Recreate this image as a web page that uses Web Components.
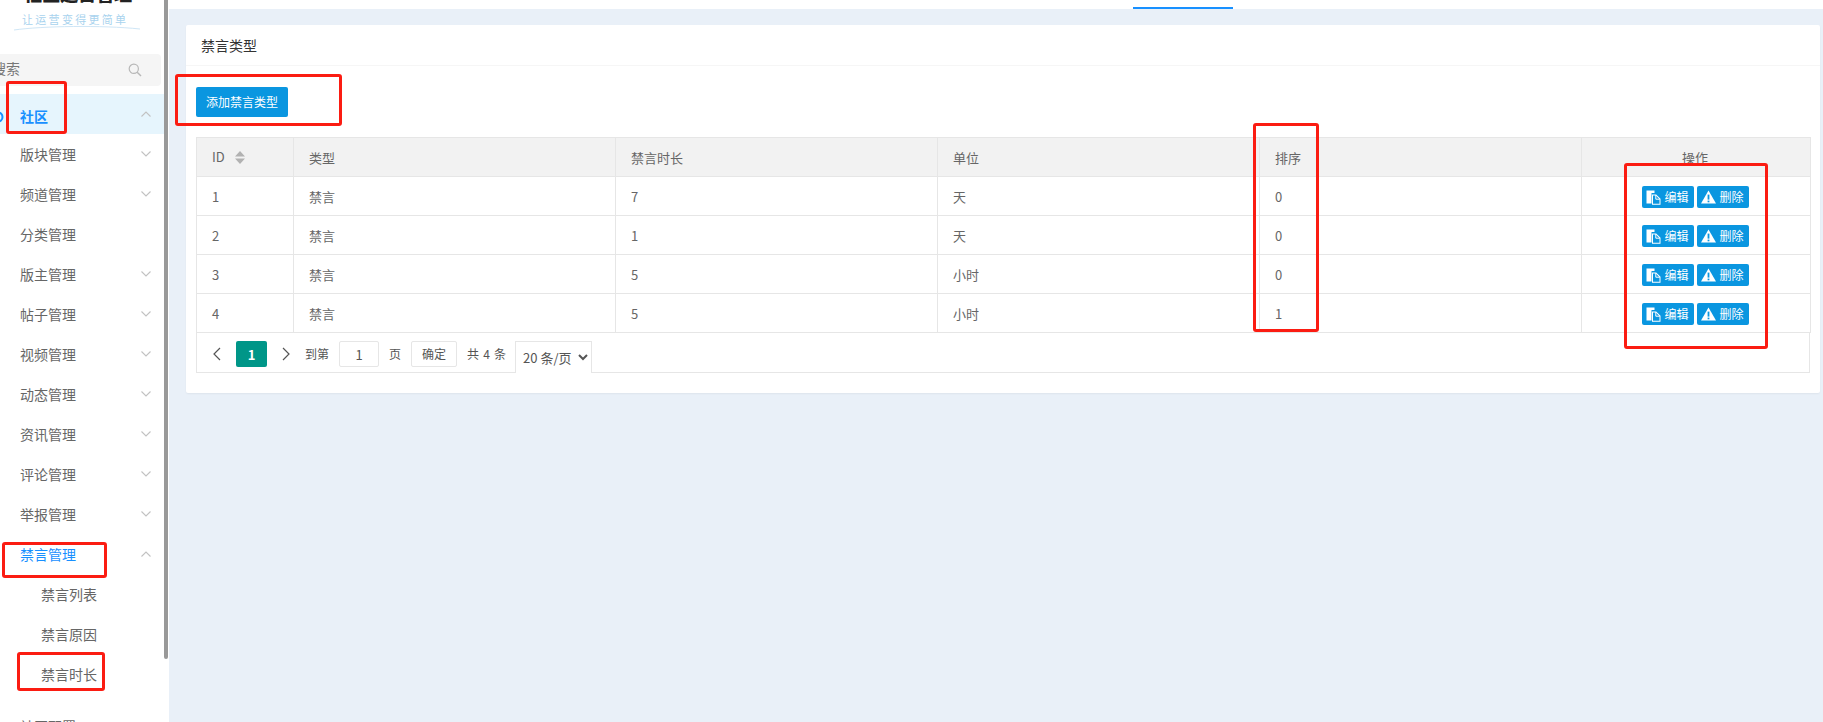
<!DOCTYPE html>
<html><head><meta charset="utf-8">
<style>
html,body{margin:0;height:100%;overflow:hidden}
body{font-family:"Noto Sans CJK SC","Noto Sans",sans-serif;color:#666}
</style></head><body>
<x-app></x-app>
<script>
const CHEV_D='M.5 .5l4.5 4.5 4.5-4.5', CHEV_U='M.5 5.5l4.5-4.5 4.5 4.5';
const chev=(up)=>`<svg width="10" height="6" viewBox="0 0 10 6"><path d="${up?CHEV_U:CHEV_D}" fill="none" stroke="#c2c2c2" stroke-width="1.1"/></svg>`;
class XNavItem extends HTMLElement{
  connectedCallback(){
    const s=this.attachShadow({mode:'open'});
    const arrow=this.getAttribute('arrow');
    s.innerHTML=`<style>
      :host{display:flex;align-items:center;height:40px;padding-left:20px;font-size:14px;color:#666;box-sizing:border-box;position:relative;line-height:1}
      :host([sub]){padding-left:41px}
      :host([open]){color:#1890ff}
      :host([root]){color:#1890ff;background:#e6f5fd;font-weight:700}
      .t{flex:1;transform:translateY(var(--dy,0))}
      .a{display:flex;width:10px;margin-right:13px}
      .ic{position:absolute;left:-8px;top:17px;width:12px;height:12px}
    </style>${this.hasAttribute('root')?'<svg class="ic" viewBox="0 0 12 12"><circle cx="6" cy="6" r="4.5" fill="none" stroke="#1890ff" stroke-width="2"/></svg>':''}<span class="t"><slot></slot></span>${arrow?`<span class="a">${chev(arrow==='up')}</span>`:''}`;
  }
}
class XSidebar extends HTMLElement{
  connectedCallback(){
    const s=this.attachShadow({mode:'open'});
    s.innerHTML=`<style>
      :host{display:block;width:169px;flex:none;background:#fff;position:relative;overflow:hidden;height:722px}
      .inner{width:164px}
      .logo{height:54px;position:relative;overflow:hidden}
      .brand{position:absolute;left:24px;top:-14px;font-size:18px;font-weight:900;color:#222;line-height:15px;white-space:nowrap}
      .sub{position:absolute;left:22px;top:12px;font-size:11px;line-height:14px;color:#a9d3ee;white-space:nowrap;letter-spacing:2.3px}
      .sw{position:absolute;left:12px;top:25px}
      .search{height:32px;background:#f5f5f5;border-radius:4px;margin-right:3px;display:flex;align-items:center;justify-content:space-between;font-size:14px;color:#777;margin-left:-10px;padding-left:2px;padding-right:19px;box-sizing:border-box;width:171px}
      .search span{transform:translateY(-2px)}
      .list{margin-top:8px}
      .thumb{position:absolute;right:1px;top:0;width:4px;height:659px;background:#999;border-radius:0 0 2px 2px}
    </style>
    <div class="inner">
      <div class="logo"><span class="brand">社区运营管理</span><span class="sub">让运营变得更简单</span>
        <svg class="sw" width="130" height="6" viewBox="0 0 130 6"><path d="M2 5C30 1 90 0 128 4" fill="none" stroke="#cfe6f6" stroke-width="1"/></svg></div>
      <div class="search"><span>搜索</span><svg width="14" height="14" viewBox="0 0 14 14"><circle cx="5.8" cy="5.8" r="4.6" fill="none" stroke="#b8b8b8" stroke-width="1.2"/><path d="M9.2 9.2L13 13" stroke="#b8b8b8" stroke-width="1.4"/></svg></div>
      <div class="list">
        <x-nav-item root arrow="up" style="--dy:2px">社区</x-nav-item>
        <x-nav-item arrow="down">版块管理</x-nav-item>
        <x-nav-item arrow="down">频道管理</x-nav-item>
        <x-nav-item>分类管理</x-nav-item>
        <x-nav-item arrow="down">版主管理</x-nav-item>
        <x-nav-item arrow="down">帖子管理</x-nav-item>
        <x-nav-item arrow="down">视频管理</x-nav-item>
        <x-nav-item arrow="down">动态管理</x-nav-item>
        <x-nav-item arrow="down">资讯管理</x-nav-item>
        <x-nav-item arrow="down">评论管理</x-nav-item>
        <x-nav-item arrow="down">举报管理</x-nav-item>
        <x-nav-item open arrow="up">禁言管理</x-nav-item>
        <x-nav-item sub>禁言列表</x-nav-item>
        <x-nav-item sub>禁言原因</x-nav-item>
        <x-nav-item sub>禁言时长</x-nav-item>
        <x-nav-item style="margin-top:12px">社区配置</x-nav-item>
      </div>
    </div><div class="thumb"></div>`;
  }
}
class XBtn extends HTMLElement{
  connectedCallback(){
    const s=this.attachShadow({mode:'open'});
    s.innerHTML=`<style>
      :host{display:inline-flex;align-items:center;justify-content:center;background:#0a96e0;color:#fff;font-size:12px;border-radius:2px;box-sizing:border-box;line-height:1}
      :host([big]){width:92px;height:30px}
      :host([small]){width:52px;height:22px;gap:3px}
      ::slotted(svg){flex:none}
    </style><slot></slot>`;
  }
}
const ICON_EDIT='<svg width="15" height="15" viewBox="0 0 15 15"><path d="M.5 .5h8v2.5H5.5v10.5H.5z" fill="#fff"/><path d="M6 4.5h4.2L14.5 8.7v6H6z" fill="#fff"/><path d="M7 5.5v8.2h6.5V9.3L9.8 5.5z" fill="#0a96e0"/><path d="M9.8 5v4.2h4.2" fill="none" stroke="#fff"/></svg>';
const ICON_WARN='<svg width="15" height="14" viewBox="0 0 15 14"><path d="M7.5.5L15 13.5H0z" fill="#fff"/><rect x="6.6" y="4.6" width="1.8" height="5" fill="#0a96e0"/><rect x="6.6" y="10.6" width="1.8" height="1.7" fill="#0a96e0"/></svg>';
class XTable extends HTMLElement{
  connectedCallback(){
    const s=this.attachShadow({mode:'open'});
    const rows=[[1,'禁言',7,'天',0],[2,'禁言',1,'天',0],[3,'禁言',5,'小时',0],[4,'禁言',5,'小时',1]];
    s.innerHTML=`<style>
      :host{display:block;width:1614px;font-size:13px;color:#666}
      table{border-collapse:collapse;table-layout:fixed;width:1614px}
      th,td{border:1px solid #e6e6e6;height:39px;box-sizing:border-box;padding:0 0 0 15px;text-align:left;font-weight:400;line-height:1}
      th{background:#f2f2f2}
      .c{text-align:center;padding:0 2px 0 0}
      .acts{display:inline-flex;gap:3px;vertical-align:middle;transform:translateY(1px)}
      .sort{display:inline-block;width:10px;height:13px;margin-left:10px;vertical-align:-2px}
    </style>
    <table><colgroup><col style="width:97px"><col style="width:322px"><col style="width:322px"><col style="width:322px"><col style="width:322px"><col style="width:229px"></colgroup>
    <thead><tr><th>ID<svg class="sort" viewBox="0 0 10 13"><path d="M5 0l5 5.5H0zM5 13l5-5.5H0z" fill="#b2b2b2"/></svg></th><th>类型</th><th>禁言时长</th><th>单位</th><th>排序</th><th class="c">操作</th></tr></thead>
    <tbody>${rows.map(r=>`<tr>${r.map(v=>`<td>${v}</td>`).join('')}<td class="c"><span class="acts"><x-btn small>${ICON_EDIT}编辑</x-btn><x-btn small>${ICON_WARN}删除</x-btn></span></td></tr>`).join('')}</tbody></table>`;
  }
}
class XPager extends HTMLElement{
  connectedCallback(){
    const s=this.attachShadow({mode:'open'});
    const ch=d=>`<svg width="10" height="14" viewBox="0 0 10 14"><path d="${d}" fill="none" stroke="#555" stroke-width="1.2"/></svg>`;
    s.innerHTML=`<style>
      :host{display:flex;align-items:flex-start;width:1614px;height:40px;box-sizing:border-box;border:1px solid #e6e6e6;border-top:0;font-size:12px;color:#555;line-height:1;padding-left:39px;padding-top:8px}
      .box{height:26px;display:flex;align-items:center;justify-content:center;box-sizing:border-box;border-radius:2px}
      .cur{width:31px;background:#009688;color:#fff;font-weight:700;font-size:13px}
      .prev{width:22px;justify-content:flex-start;margin-left:-24px;margin-right:2px}
      .next{width:38px}
      .in{width:40px;border:1px solid #e6e6e6;margin:0 10px;font-size:13px}
      .ok{width:46px;border:1px solid #e6e6e6;margin:0 10px}
      .tx{height:26px;display:flex;align-items:center;white-space:pre;word-spacing:1.5px}
      select{width:77px;height:32px;margin:0 0 0 9px;border:1px solid #e6e6e6;border-bottom:0;background:#fff;color:#555;font:13px "Noto Sans CJK SC","Noto Sans",sans-serif;padding:0 0 0 3px;border-radius:0}
    </style>
    <span class="box prev">${ch('M8 1L2 7l6 6')}</span><span class="box cur">1</span><span class="box next">${ch('M2 1l6 6-6 6')}</span>
    <span class="tx">到第</span><span class="box in">1</span><span class="tx">页</span><span class="box ok">确定</span><span class="tx">共 4 条</span>
    <select><option>20 条/页</option></select>`;
  }
}
class XCard extends HTMLElement{
  connectedCallback(){
    const s=this.attachShadow({mode:'open'});
    s.innerHTML=`<style>
      :host{display:block;background:#fff;border-radius:2px;box-shadow:0 1px 2px rgba(0,0,0,.05);width:1634px;height:368px;box-sizing:border-box}
      .h{height:41px;border-bottom:1px solid #f6f6f6;box-sizing:border-box;padding-left:15px;display:flex;align-items:center;font-size:14px;color:#333;line-height:1}
      .b{padding:21px 10px 0}
      .tb{height:50px}
    </style>
    <div class="h">禁言类型</div>
    <div class="b"><div class="tb"><x-btn big>添加禁言类型</x-btn></div><x-table></x-table><x-pager></x-pager></div>`;
  }
}
class XMark extends HTMLElement{
  connectedCallback(){
    const s=this.attachShadow({mode:'open'});
    s.innerHTML=`<style>:host{position:absolute;box-sizing:border-box;border:3px solid #fb1c12;border-radius:3px;pointer-events:none;z-index:5}</style>`;
  }
}
class XApp extends HTMLElement{
  connectedCallback(){
    const s=this.attachShadow({mode:'open'});
    const marks=[[6,81,61,53],[175,74,167,52],[1253,123,66,209],[1624,163,144,186],[2,542,105,36],[17,652,88,39]];
    s.innerHTML=`<style>
      :host{display:flex;width:1823px;height:722px;position:relative;overflow:hidden;background:#e9f0f8}
      .main{flex:1;display:flex;flex-direction:column;min-width:0}
      .top{height:9px;background:#fff;flex:none;position:relative}
      .tab{position:absolute;left:964px;top:7px;width:100px;height:2px;background:#1890ff}
      .content{padding:16px 0 0 17px}
    </style>
    <x-sidebar></x-sidebar>
    <div class="main"><div class="top"><div class="tab"></div></div><div class="content"><x-card></x-card></div></div>
    ${marks.map(m=>`<x-mark style="left:${m[0]}px;top:${m[1]}px;width:${m[2]}px;height:${m[3]}px"></x-mark>`).join('')}`;
  }
}
customElements.define('x-nav-item',XNavItem);
customElements.define('x-btn',XBtn);
customElements.define('x-table',XTable);
customElements.define('x-pager',XPager);
customElements.define('x-card',XCard);
customElements.define('x-sidebar',XSidebar);
customElements.define('x-mark',XMark);
customElements.define('x-app',XApp);
</script></body></html>
